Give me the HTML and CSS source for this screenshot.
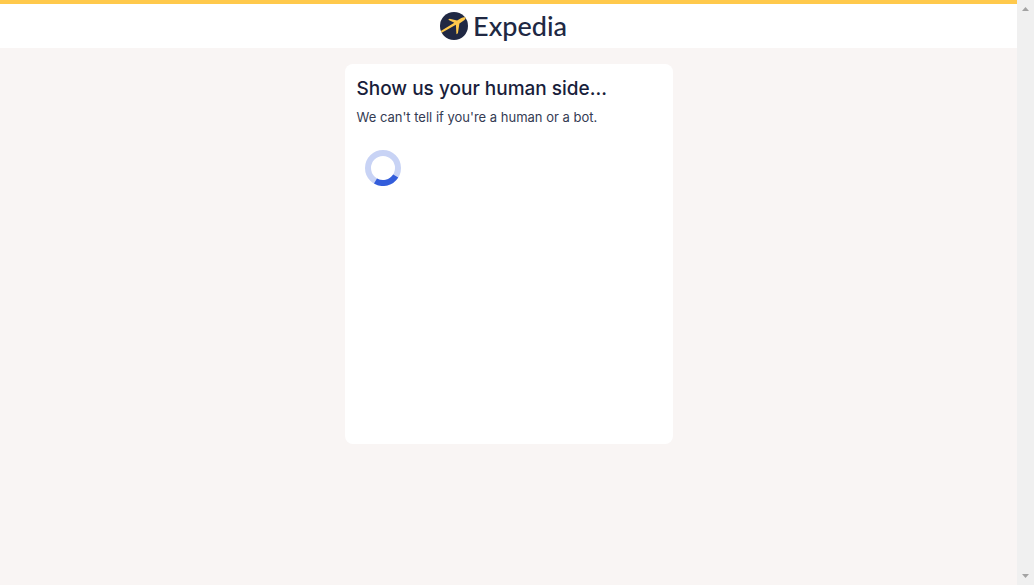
FILE: index.html
```html
<!DOCTYPE html>
<html lang="en">
<head>
<meta charset="utf-8">
<meta name="viewport" content="width=device-width, initial-scale=1">
<title>Expedia</title>
<link rel="stylesheet" href="styles.css">
</head>
<body class="window">
<div class="page">
  <header class="header">
    <svg class="logo-mark" viewBox="0 0 28 28" aria-hidden="true">
      <circle cx="14" cy="14" r="14" fill="#202843"/>
      <path fill="#ffc94c" d="M25.700 5.400c-1.600-.5-3.100-.1-4.400.7l-4.200 2.500-7.500-1.800-1.400 1 6.100 2.900-13.400 8.200.8 1.800 14.200-7.900.5 9.400 1.500-.9 1.500-9.900 4.400-2.800c1-.7 1.700-1.800 1.900-3.200z"/>
    </svg>
    <span class="logo-name">Expedia</span>
  </header>
  <main class="content">
    <section class="card">
      <h1 class="title">Show us your human side...</h1>
      <p class="message">We can't tell if you're a human or a bot.</p>
      <svg class="spinner" viewBox="0 0 36 36" role="img" aria-label="Loading">
        <circle cx="18" cy="18" r="15" fill="none" stroke="#c8d3f5" stroke-width="6"/>
        <path d="M30.700 26A15 15 0 0 1 10.500 31" fill="none" stroke="#335ddb" stroke-width="6"/>
      </svg>
    </section>
  </main>
</div>
<div class="scrollbar" aria-hidden="true">
  <svg class="arrow" viewBox="0 0 7 4"><path d="M0 4h7L3.500 0z"/></svg>
  <svg class="arrow" viewBox="0 0 7 4"><path d="M0 0h7L3.500 4z"/></svg>
</div>
</body>
</html>
```
FILE: styles.css
```css
* {
  box-sizing: border-box;
}

.window {
  display: flex;
  min-height: 100vh;
  margin: 0;
  background: #f9f5f4;
  font-family: Inter, "Liberation Sans", sans-serif;
}

.page {
  flex: 1;
}

.header {
  display: flex;
  align-items: center;
  justify-content: center;
  gap: 5px;
  height: 48px;
  padding-right: 10px;
  border-top: 4px solid #ffc94c;
  background: #fff;
}

.logo-mark {
  width: 28px;
  height: 28px;
}

.logo-name {
  color: #202843;
  font-family: Lato, sans-serif;
  font-size: 27px;
  font-weight: 500;
  line-height: 32px;
}

.content {
  display: flex;
  justify-content: center;
  padding: 16px;
}

.card {
  width: 100%;
  max-width: 328px;
  min-height: 380px;
  padding: 12px;
  border-radius: 8px;
  background: #fff;
}

.title {
  margin: 0;
  color: #191e3b;
  font-size: 19px;
  font-weight: 500;
  line-height: 26px;
}

.message {
  margin: 6px 0 0;
  color: #343b53;
  font-size: 13px;
  line-height: 18px;
}

.spinner {
  display: block;
  width: 36px;
  height: 36px;
  margin: 24px 8px;
}

.scrollbar {
  display: flex;
  flex-direction: column;
  align-items: center;
  justify-content: space-between;
  width: 17px;
  padding: 7px 0;
  background: #f0f0f0;
}

.arrow {
  width: 7px;
  height: 4px;
  fill: #a3a3a3;
}
```
